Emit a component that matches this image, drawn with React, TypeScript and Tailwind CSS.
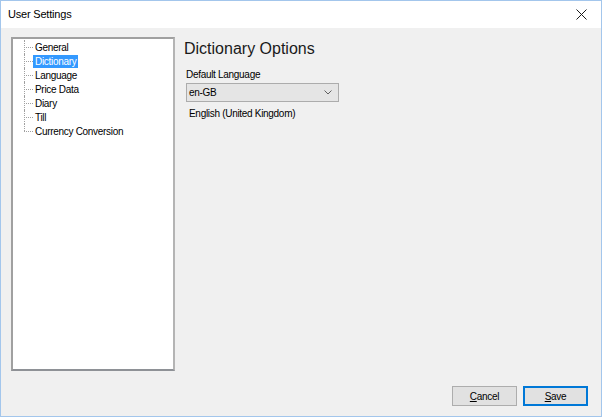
import React from 'react';

const treeItems = ['General', 'Dictionary', 'Language', 'Price Data', 'Diary', 'Till', 'Currency Conversion'];

function TreeRow({ label, selected, last }: { label: string; selected?: boolean; last?: boolean }) {
  return (
    <div className="flex items-center h-[14px]">
      {/* connector lines */}
      <div className="relative w-[9px] h-full shrink-0">
        <span
          className={`absolute left-0 top-0 border-l border-dotted border-[#a0a0a0] ${last ? 'h-[7px]' : 'h-full'}`} />
        <span className="absolute left-0 top-[7px] w-[9px] border-t border-dotted border-[#a0a0a0]" />
      </div>
      <span
        className={`h-[13px] leading-[13px] px-[2px] whitespace-nowrap ${selected ? 'bg-[#3399ff] text-white' : 'text-black'}`}>
        {label}
      </span>
    </div>);
}

export default function App() {
  return (
    <div className="w-[602px] h-[417px] flex flex-col border border-[#a3c6ec] bg-[#f0f0f0] font-['Liberation_Sans',Arial,sans-serif] text-[10px] tracking-[-0.3px] text-black overflow-hidden">
      {/* Title bar */}
      <div className="h-[27px] shrink-0 bg-white flex items-center justify-between pl-[7px] pr-[14px]">
        <span className="text-[11px] tracking-[-0.2px]">User Settings</span>
        <svg width="11" height="11" viewBox="0 0 11 11" className="text-[#1a1a1a]">
          <path d="M0.5 0.5 L10.5 10.5 M10.5 0.5 L0.5 10.5" stroke="currentColor" strokeWidth="1" fill="none" />
        </svg>
      </div>

      {/* Body */}
      <div className="flex-1 flex flex-col pt-[9px] pl-[10px] pr-[13px] pb-[10px]">
        <div className="flex h-[334px] shrink-0">
          {/* Tree */}
          <div className="w-[164px] h-full bg-white border-2 border-t-[#a0a0a0] border-l-[#a0a0a0] border-r-[#b4b4b4] border-b-[#8e9196] pl-[11px] pt-[1px]">
            {treeItems.map((item, i) =>
            <TreeRow key={item} label={item} selected={item === 'Dictionary'} last={i === treeItems.length - 1} />
            )}
          </div>

          {/* Options panel */}
          <div className="ml-[9px] flex flex-col items-start">
            <div className="mt-[2px] text-[16px] leading-[20px] tracking-normal text-[#1a1a1a]">Dictionary Options</div>
            <div className="mt-[9px] ml-[2px] leading-[13px]">Default Language</div>
            <div className="mt-[2px] ml-[2px] w-[153px] h-[19px] bg-[#e5e5e5] border border-[#acacac] flex items-center justify-between pl-[2px] pr-[6px]">
              <span>en-GB</span>
              <svg width="8" height="5" viewBox="0 0 8 5">
                <path d="M0.5 0.5 L4 4 L7.5 0.5" stroke="#606060" strokeWidth="1" fill="none" />
              </svg>
            </div>
            <div className="mt-[5px] ml-[5px] leading-[13px]">English (United Kingdom)</div>
          </div>
        </div>

        {/* Buttons */}
        <div className="mt-[15px] flex justify-end gap-[6px]">
          <button className="w-[65px] h-[20px] bg-[#e1e1e1] border border-[#adadad] flex items-center justify-center">
            <span><span className="underline">C</span>ancel</span>
          </button>
          <button className="w-[65px] h-[20px] bg-[#e1e1e1] border border-[#0078d7] shadow-[inset_0_0_0_1px_#0078d7] flex items-center justify-center">
            <span><span className="underline">S</span>ave</span>
          </button>
        </div>
      </div>
    </div>);
}
